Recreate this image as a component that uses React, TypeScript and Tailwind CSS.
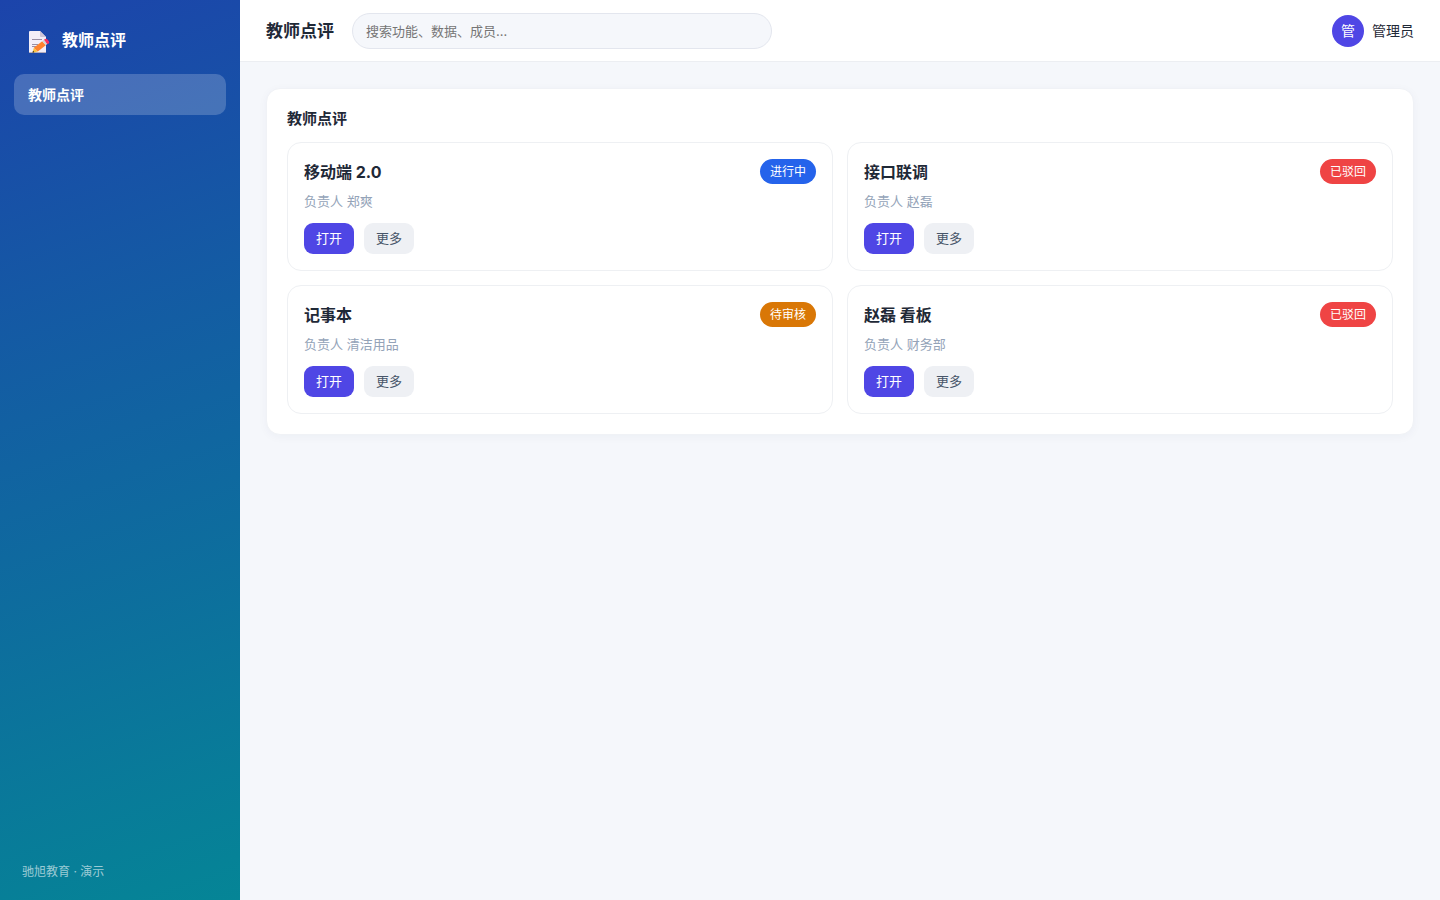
import { useState } from 'react'

type Status = 'active' | 'rejected' | 'pending'

interface Item {
  id: number
  title: string
  owner: string
  status: Status
}

const items: Item[] = [
  { id: 1, title: '移动端 2.0', owner: '郑爽', status: 'active' },
  { id: 2, title: '接口联调', owner: '赵磊', status: 'rejected' },
  { id: 3, title: '记事本', owner: '清洁用品', status: 'pending' },
  { id: 4, title: '赵磊 看板', owner: '财务部', status: 'rejected' },
]

const statuses: Record<Status, { label: string; className: string }> = {
  active: { label: '进行中', className: 'bg-[#2563eb]' },
  rejected: { label: '已驳回', className: 'bg-[#ef4444]' },
  pending: { label: '待审核', className: 'bg-[#d97706]' },
}

function MemoIcon() {
  return (
    <svg width="22" height="28" viewBox="0 -4 22 28" aria-hidden="true">
      <path d="M2 1h10l6 6v16H2a1 1 0 0 1-1-1V2a1 1 0 0 1 1-1Z" fill="#f3eef8" />
      <path d="M12 1l6 6h-5a1 1 0 0 1-1-1Z" fill="#cdc4d6" />
      <path d="M1 22h17v1H1Z" fill="#b4acbc" />
      <path d="M4 9.5h10M4 14.5h6M4 16.5h5" stroke="#998ea4" strokeWidth="1" />
      <path d="M4.5 22.8l1.3-5 4 3.8Z" fill="#f9c23c" />
      <path d="M4.5 22.8l.5-2 1.5 1.5Z" fill="#212121" />
      <path d="M5.8 17.8l8.4-6.6 3.6 4.1-8 6.3Z" fill="#ff822d" />
      <path d="M14.2 11.2l1.8-1.4 3.5 4-1.7 1.5Z" fill="#d3d3d3" />
      <path d="M16 9.8l1-.7a1.6 1.6 0 0 1 2.2.2l1.7 1.9a1.6 1.6 0 0 1-.2 2.2l-1.2.9Z" fill="#f92f60" />
    </svg>
  )
}

function Sidebar() {
  return (
    <aside className="flex w-60 shrink-0 flex-col bg-[linear-gradient(160deg,#1c44ab,#058596)] px-3.5 pt-5 pb-4 text-white">
      <div className="mb-3.5 flex h-10 items-center gap-3 px-3.5">
        <MemoIcon />
        <span className="text-base font-bold">教师点评</span>
      </div>
      <nav>
        <a href="#reviews" className="flex h-[41px] items-center rounded-[10px] bg-white/20 px-3.5 text-sm font-bold">
          教师点评
        </a>
      </nav>
      <div className="mt-auto px-2 text-xs leading-6 text-white/60">驰旭教育 · 演示</div>
    </aside>
  )
}

function Header() {
  const [query, setQuery] = useState('')

  return (
    <header className="flex h-[62px] items-center gap-[18px] border-b border-[#eceef2] bg-white px-[26px]">
      <h1 className="text-[17px] leading-7 font-bold">教师点评</h1>
      <input
        type="search"
        aria-label="搜索"
        value={query}
        onChange={(e) => setQuery(e.target.value)}
        placeholder="搜索功能、数据、成员…"
        className="h-9 w-full max-w-[420px] rounded-full border border-[#e3e6ee] bg-[#f5f7fb] px-[13px] text-[13px] placeholder:text-[#757575] focus:outline-none focus:ring-2 focus:ring-indigo-500"
      />
      <div className="ml-auto flex shrink-0 items-center gap-2 text-sm">
        <span className="flex size-8 items-center justify-center rounded-full bg-[#4f46e5] text-white">管</span>
        <span>管理员</span>
      </div>
    </header>
  )
}

function ItemCard({ item }: { item: Item }) {
  const status = statuses[item.status]

  return (
    <article className="rounded-[14px] border border-[#eef0f3] p-4">
      <div className="flex items-center justify-between">
        <h3 className="text-base font-bold">{item.title}</h3>
        <span className={`rounded-full px-2.5 text-xs leading-[25px] text-white ${status.className}`}>
          {status.label}
        </span>
      </div>
      <p className="mt-[7px] text-[13px] leading-5 text-[#94a3b8]">负责人 {item.owner}</p>
      <div className="mt-3 flex gap-2.5">
        <button type="button" className="h-[31px] rounded-[9px] bg-[#4f46e5] px-3 text-[13px] text-white">
          打开
        </button>
        <button type="button" className="h-[31px] rounded-[9px] bg-[#eef0f4] px-3 text-[13px] text-[#475569]">
          更多
        </button>
      </div>
    </article>
  )
}

export default function App() {
  return (
    <div className="flex min-h-screen bg-[#f5f7fb] font-['Inter','Noto_Sans_CJK_SC',sans-serif] text-[#1f2937]">
      <Sidebar />
      <div className="min-w-0 flex-1">
        <Header />
        <main className="p-[26px]">
          <section className="rounded-[14px] border border-[#f0f2f6] bg-white p-5 shadow-[0_2px_10px_rgba(30,41,90,0.04)]">
            <h2 className="mb-3.5 text-[15px] leading-[19px] font-bold">教师点评</h2>
            <div className="grid grid-cols-2 gap-3.5">
              {items.map((item) => (
                <ItemCard key={item.id} item={item} />
              ))}
            </div>
          </section>
        </main>
      </div>
    </div>
  )
}
